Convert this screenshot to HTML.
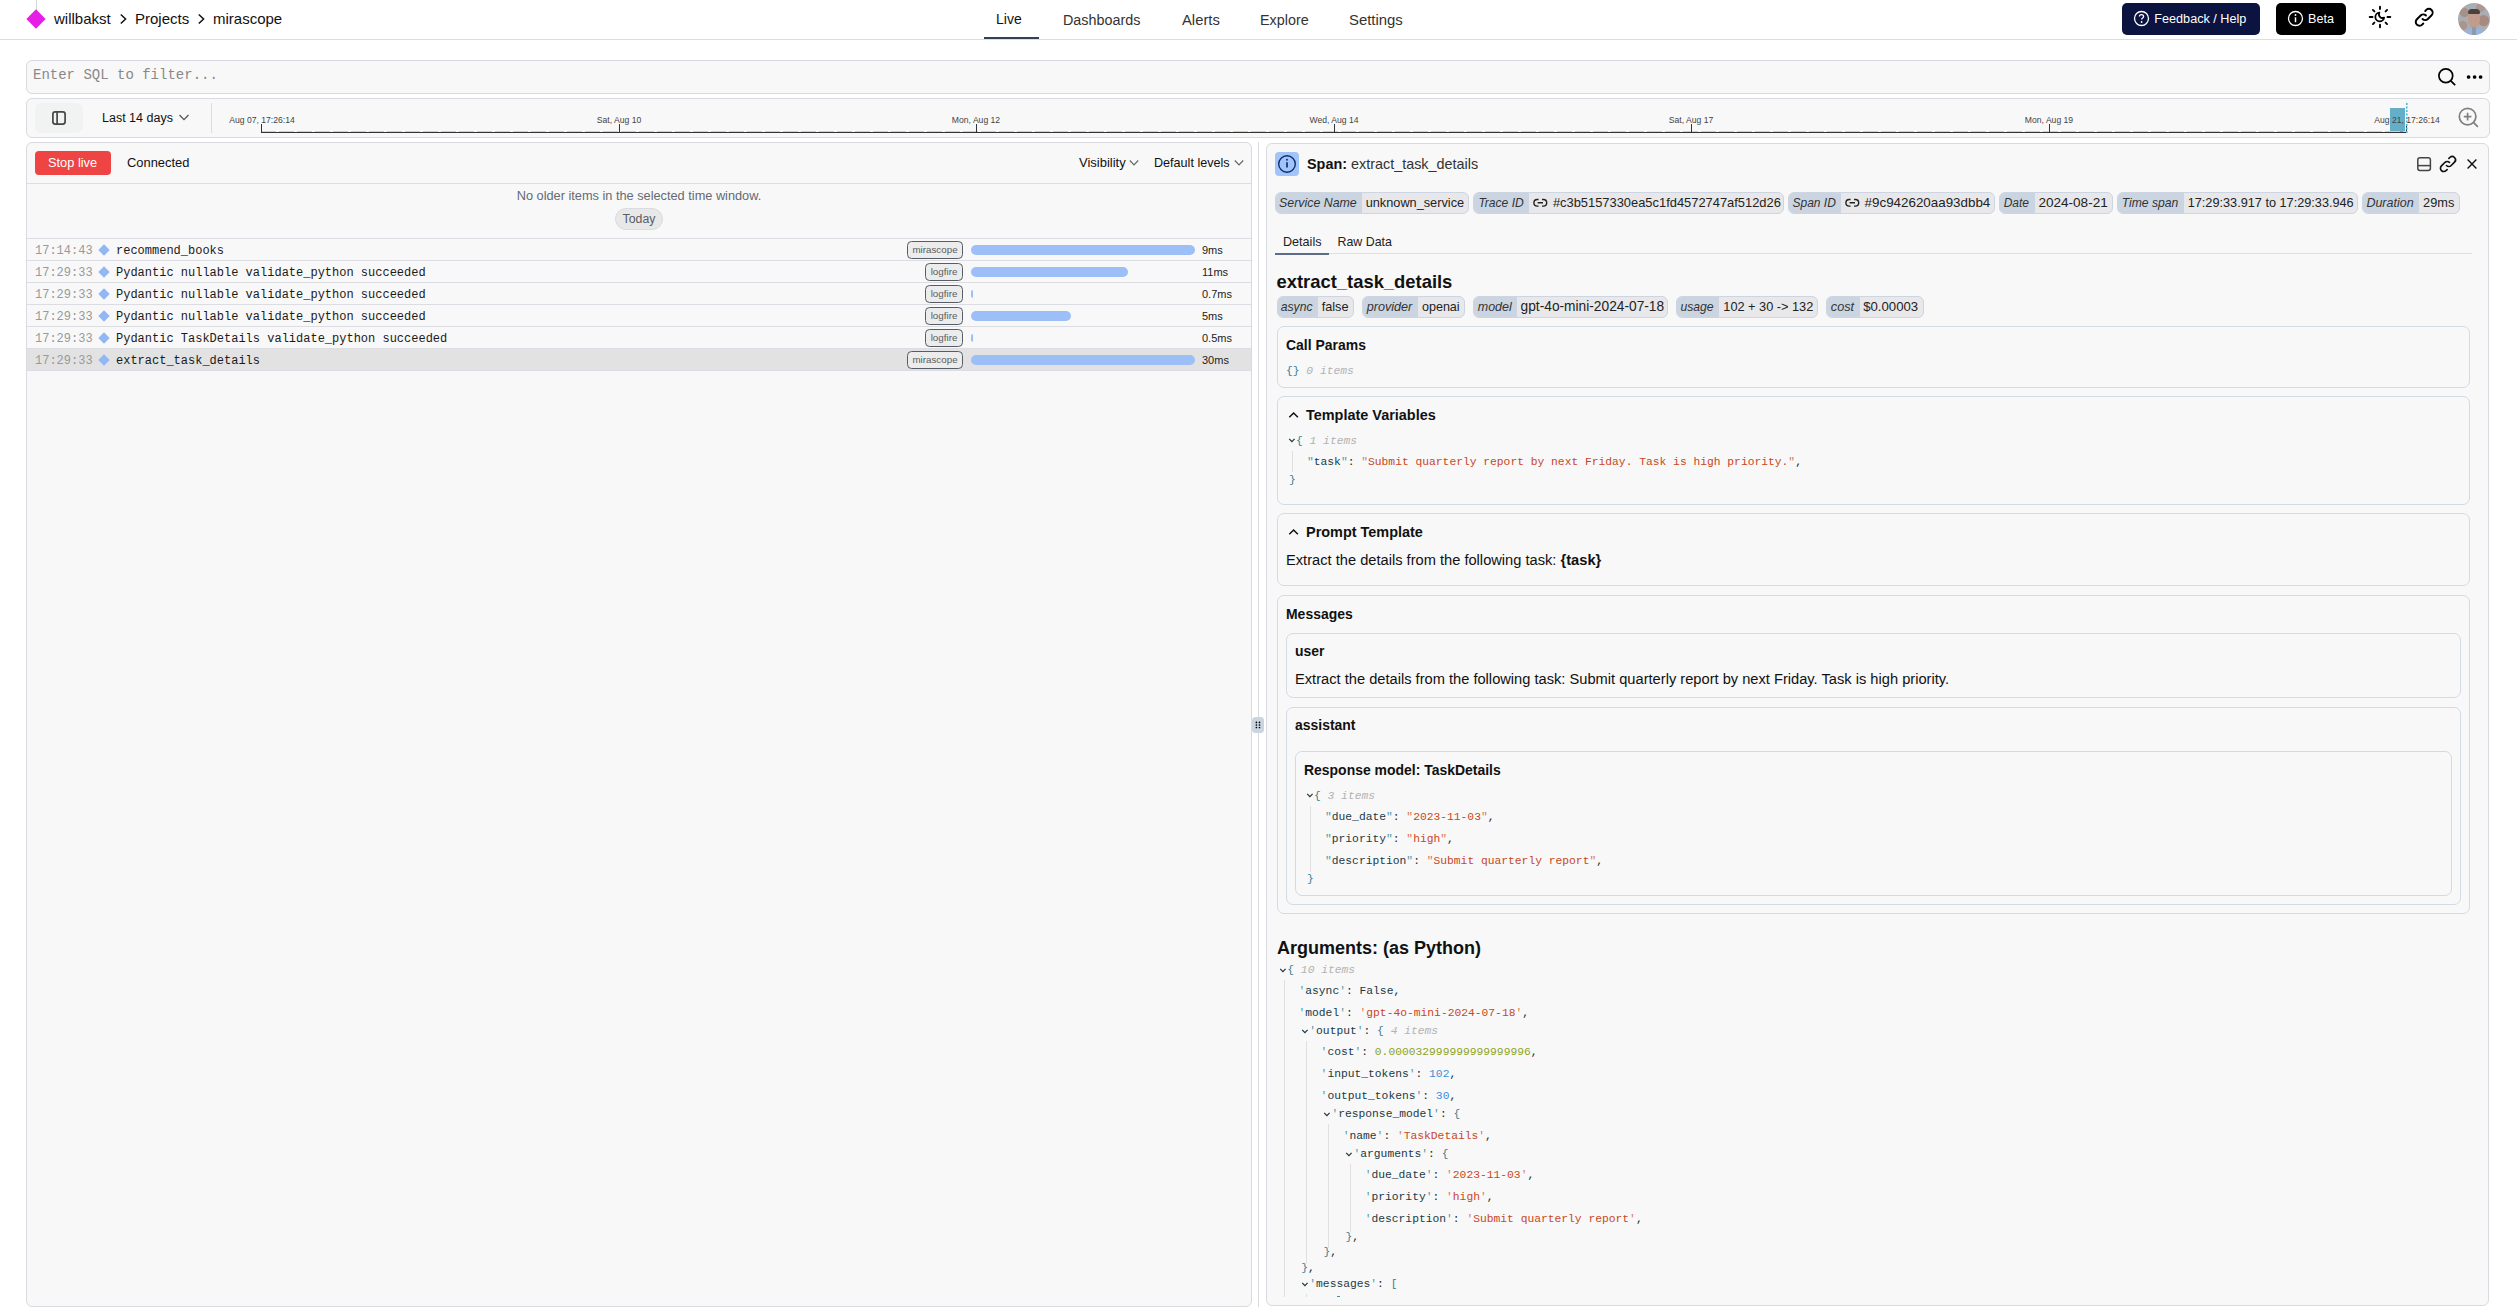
<!DOCTYPE html>
<html><head><meta charset="utf-8">
<style>
*{box-sizing:border-box;margin:0;padding:0}
html,body{width:2517px;height:1308px;overflow:hidden;background:#fff;font-family:"Liberation Sans",sans-serif;color:#111}
.a{position:absolute;white-space:nowrap}
.mono{font-family:"Liberation Mono",monospace}
.box{position:absolute;background:#f8f8f8;border:1px solid #d9dadf;border-radius:6px}
</style></head><body>
<!-- HEADER -->
<div class="a" style="left:0;top:39px;width:2517px;height:1px;background:#dcdde2"></div>
<div class="a" style="left:36px;top:0;width:1px;height:10px;background:#d4d6da"></div>
<svg class="a" style="left:25px;top:8px" width="22" height="22" viewBox="0 0 22 22"><path d="M11 1.2 L20.6 11 L11 20.8 L1.4 11 Z" fill="#e61ee6"/></svg>
<div class="a" style="left:54px;top:10px;font-size:15px;line-height:18px;color:#111">willbakst</div>
<svg class="a" style="left:118px;top:13px" width="10" height="12" viewBox="0 0 10 12"><path d="M2.8 1.5 L7.6 6 L2.8 10.5" fill="none" stroke="#111" stroke-width="1.5"/></svg>
<div class="a" style="left:135px;top:10px;font-size:15px;line-height:18px;color:#111">Projects</div>
<svg class="a" style="left:196px;top:13px" width="10" height="12" viewBox="0 0 10 12"><path d="M2.8 1.5 L7.6 6 L2.8 10.5" fill="none" stroke="#111" stroke-width="1.5"/></svg>
<div class="a" style="left:213px;top:10px;font-size:15px;line-height:18px;color:#111">mirascope</div>

<div class="a" style="left:996px;top:10px;font-size:14px;line-height:18px;color:#111">Live</div>
<div class="a" style="left:984px;top:37px;width:55px;height:2px;background:#334155"></div>
<div class="a" style="left:1063px;top:11px;font-size:14.35px;line-height:18px;color:#333">Dashboards</div>
<div class="a" style="left:1182px;top:11px;font-size:14.8px;line-height:18px;color:#333">Alerts</div>
<div class="a" style="left:1260px;top:11px;font-size:14.35px;line-height:18px;color:#333">Explore</div>
<div class="a" style="left:1349px;top:11px;font-size:14.9px;line-height:18px;color:#333">Settings</div>

<div class="a" style="left:2122px;top:3px;width:138px;height:32px;background:#0b1340;border-radius:5px"></div>
<svg class="a" style="left:2133px;top:10px" width="17" height="17" viewBox="0 0 17 17"><circle cx="8.5" cy="8.5" r="7" fill="none" stroke="#fff" stroke-width="1.3"/><path d="M6.4 6.6 C6.4 5.3 7.4 4.6 8.5 4.6 C9.7 4.6 10.6 5.4 10.6 6.5 C10.6 7.9 8.6 8 8.6 9.6" fill="none" stroke="#fff" stroke-width="1.3"/><circle cx="8.6" cy="12" r="0.9" fill="#fff"/></svg>
<div class="a" style="left:2154.3px;top:10px;font-size:12.65px;line-height:18px;color:#fff">Feedback / Help</div>
<div class="a" style="left:2276px;top:3px;width:70px;height:32px;background:#000;border-radius:5px"></div>
<svg class="a" style="left:2287px;top:10px" width="17" height="17" viewBox="0 0 17 17"><circle cx="8.5" cy="8.5" r="7" fill="none" stroke="#fff" stroke-width="1.3"/><path d="M8.5 7.3 V12.2" stroke="#fff" stroke-width="1.5"/><circle cx="8.5" cy="5" r="0.95" fill="#fff"/></svg>
<div class="a" style="left:2308px;top:10px;font-size:12.6px;line-height:18px;color:#fff">Beta</div>

<svg class="a" style="left:2368px;top:5px" width="24" height="24" viewBox="0 0 24 24" fill="none" stroke="#000" stroke-width="1.9" stroke-linecap="butt">
<path d="M12 1.8V4.1M12 19.8V22.2M1.7 12H4.5M19.5 12H22.3M4.9 4.9L6.4 6.4M17.6 17.6L19.1 19.1M4.9 19.1L6.4 17.6M17.6 6.4L19.1 4.9" stroke-linecap="round"/>
<path d="M11.4 7.6 A4.4 4.4 0 1 0 16.1 12.6 A3.6 3.6 0 0 1 11.4 7.6 Z" stroke-width="1.8" stroke-linejoin="round"/>
</svg>
<svg class="a" style="left:2412.5px;top:5.5px" width="22.5" height="22.5" viewBox="0 0 24 24" fill="none" stroke="#000" stroke-width="2.1" stroke-linecap="round" stroke-linejoin="round"><path d="M13.828 10.172a4 4 0 00-5.656 0l-4 4a4 4 0 105.656 5.656l1.102-1.101m-.758-4.899a4 4 0 005.656 0l4-4a4 4 0 00-5.656-5.656l-1.1 1.1"/></svg>
<div class="a" style="left:2458px;top:3px;width:32px;height:32px;border-radius:50%;overflow:hidden;background:#a8aeb2">
<div class="a" style="left:0;top:0;width:32px;height:32px;background:radial-gradient(circle at 20% 30%,rgba(170,120,100,.55) 0 4px,transparent 5px),radial-gradient(circle at 80% 55%,rgba(165,115,95,.6) 0 5px,transparent 6px),radial-gradient(circle at 15% 70%,rgba(170,125,105,.5) 0 4px,transparent 5px),radial-gradient(circle at 70% 15%,rgba(175,130,110,.5) 0 4px,transparent 5px)"></div>
<div class="a" style="left:10px;top:8px;width:12px;height:17px;border-radius:45% 45% 50% 50%;background:#c09c8c"></div>
<div class="a" style="left:10px;top:6px;width:12px;height:5px;border-radius:6px 6px 2px 2px;background:#4a4240"></div>
<div class="a" style="left:5px;top:25px;width:23px;height:11px;border-radius:10px 10px 0 0;background:#98b2e2"></div>
<div class="a" style="left:14px;top:24px;width:4px;height:8px;background:#8f9aa2"></div>
</div>

<!-- SQL BOX -->
<div class="box" style="left:26px;top:60px;width:2464px;height:34px"></div>
<div class="a mono" style="left:33px;top:67px;font-size:14px;line-height:16px;color:#888">Enter SQL to filter...</div>

<!-- TIMELINE BOX -->
<div class="box" style="left:26px;top:98px;width:2464px;height:40px"></div>
<div class="a" style="left:35px;top:103px;width:48px;height:30px;background:#f1f2f2;border-radius:7px"></div>
<svg class="a" style="left:50px;top:109px" width="18" height="18" viewBox="0 0 18 18" fill="none" stroke="#464646" stroke-width="1.7"><rect x="2.9" y="2.9" width="12.2" height="12.2" rx="2.3"/><path d="M7.1 3V15"/></svg>
<div class="a" style="left:102px;top:110px;font-size:12.5px;line-height:16px;color:#111">Last 14 days</div>
<svg class="a" style="left:178px;top:112px" width="12" height="10" viewBox="0 0 12 10" fill="none" stroke="#555" stroke-width="1.3"><path d="M1.5 3 L6 7.6 L10.5 3"/></svg>
<div class="a" style="left:211px;top:103px;width:1px;height:30px;background:#dcdde0"></div>
<div class="a" style="left:2390px;top:108px;width:15px;height:24px;background:#64aec8"></div>
<svg class="a" style="left:255px;top:128px" width="2160" height="8"><path d="M6 3.5 H2151" stroke="#a9dbe8" stroke-width="1" stroke-dasharray="15 3"/><path d="M6 4.5 H2151" stroke="#333" stroke-width="1"/></svg>
<div class="a" style="left:261px;top:124px;width:1px;height:9px;background:#333"></div>
<div class="a" style="left:202px;top:115px;width:120px;text-align:center;font-size:8.6px;line-height:10px;color:#444">Aug 07, 17:26:14</div>
<div class="a" style="left:619px;top:124px;width:1px;height:9px;background:#333"></div>
<div class="a" style="left:559px;top:115px;width:120px;text-align:center;font-size:8.6px;line-height:10px;color:#444">Sat, Aug 10</div>
<div class="a" style="left:976px;top:124px;width:1px;height:9px;background:#333"></div>
<div class="a" style="left:916px;top:115px;width:120px;text-align:center;font-size:8.6px;line-height:10px;color:#444">Mon, Aug 12</div>
<div class="a" style="left:1334px;top:124px;width:1px;height:9px;background:#333"></div>
<div class="a" style="left:1274px;top:115px;width:120px;text-align:center;font-size:8.6px;line-height:10px;color:#444">Wed, Aug 14</div>
<div class="a" style="left:1691px;top:124px;width:1px;height:9px;background:#333"></div>
<div class="a" style="left:1631px;top:115px;width:120px;text-align:center;font-size:8.6px;line-height:10px;color:#444">Sat, Aug 17</div>
<div class="a" style="left:2049px;top:124px;width:1px;height:9px;background:#333"></div>
<div class="a" style="left:1989px;top:115px;width:120px;text-align:center;font-size:8.6px;line-height:10px;color:#444">Mon, Aug 19</div>
<div class="a" style="left:2406px;top:124px;width:1px;height:9px;background:#333"></div>
<div class="a" style="left:2347px;top:115px;width:120px;text-align:center;font-size:8.6px;line-height:10px;color:#444">Aug 21, 17:26:14</div>
<svg class="a" style="left:2403px;top:101px" width="8" height="33"><path d="M3.8 2 V32" stroke="#4fb9da" stroke-width="1.6" stroke-dasharray="2 1.5"/></svg>
<svg class="a" style="left:2457px;top:106px" width="24" height="24" viewBox="0 0 24 24" fill="none" stroke="#808080" stroke-width="1.7"><circle cx="10.6" cy="10.6" r="8.3"/><path d="M16.6 16.6 L20.9 20.9M10.6 6.8V14.4M6.8 10.6H14.4"/></svg>

<!-- SQL icons -->
<svg class="a" style="left:2436px;top:66px" width="22" height="22" viewBox="0 0 22 22" fill="none" stroke="#000" stroke-width="1.7"><circle cx="9.8" cy="9.8" r="6.9"/><path d="M14.8 14.8 L19.2 19.2"/></svg>
<svg class="a" style="left:2465px;top:72px" width="20" height="10" viewBox="0 0 20 10" fill="#000"><circle cx="3.6" cy="5" r="1.85"/><circle cx="9.6" cy="5" r="1.85"/><circle cx="15.6" cy="5" r="1.85"/></svg>

<!-- LEFT PANEL -->
<div class="box" style="left:26px;top:142px;width:1226px;height:1165px"></div>
<div class="a" style="left:35px;top:151px;width:76px;height:24px;background:#ef4444;border-radius:4px"></div>
<div class="a" style="left:48px;top:155px;font-size:12.8px;line-height:16px;color:#fff">Stop live</div>
<div class="a" style="left:127px;top:155px;font-size:12.9px;line-height:16px;color:#111">Connected</div>
<div class="a" style="left:1079px;top:155px;font-size:13px;line-height:16px;color:#111">Visibility</div>
<svg class="a" style="left:1128px;top:158px" width="12" height="9" viewBox="0 0 12 9" fill="none" stroke="#666" stroke-width="1.2"><path d="M1.8 2.5 L6 6.8 L10.2 2.5"/></svg>
<div class="a" style="left:1154px;top:155px;font-size:12.6px;line-height:16px;color:#111">Default levels</div>
<svg class="a" style="left:1233px;top:158px" width="12" height="9" viewBox="0 0 12 9" fill="none" stroke="#666" stroke-width="1.2"><path d="M1.8 2.5 L6 6.8 L10.2 2.5"/></svg>
<div class="a" style="left:27px;top:183px;width:1224px;height:1px;background:#dcdde2"></div>
<div class="a" style="left:27px;top:188px;width:1224px;text-align:center;font-size:12.75px;line-height:16px;color:#646a74">No older items in the selected time window.</div>
<div class="a" style="left:615px;top:208px;width:48px;height:22px;background:#e8e8e9;border:1px solid #dadbdf;border-radius:11px"></div>
<div class="a" style="left:615px;top:211px;width:48px;text-align:center;font-size:12.3px;line-height:16px;color:#585d66">Today</div>
<div class="a" style="left:27px;top:238px;width:1224px;height:1px;background:#dcdde2"></div>
<div class="a" style="left:27px;top:239px;width:1224px;height:21px;background:transparent"></div>
<div class="a mono" style="left:35px;top:244px;font-size:12px;line-height:14px;color:#999">17:14:43</div>
<div class="a" style="left:100px;top:246px;width:8px;height:8px;background:#93b6f5;transform:rotate(45deg)"></div>
<div class="a mono" style="left:116px;top:244px;font-size:12px;line-height:14px;color:#1a1a1a">recommend_books</div>
<div class="a" style="left:907px;top:241px;width:56px;height:18px;border:1px solid #565d66;border-radius:4.5px;background:#ececec;font-size:9.8px;line-height:16px;text-align:center;color:#5c5c5c">mirascope</div>
<div class="a" style="left:971px;top:245px;width:224px;height:10px;background:#9dbff7;border-radius:5px"></div>
<div class="a" style="left:1202px;top:243px;font-size:11px;line-height:14px;color:#222">9ms</div>
<div class="a" style="left:27px;top:260px;width:1224px;height:1px;background:#dcdde2"></div>
<div class="a" style="left:27px;top:261px;width:1224px;height:21px;background:transparent"></div>
<div class="a mono" style="left:35px;top:266px;font-size:12px;line-height:14px;color:#999">17:29:33</div>
<div class="a" style="left:100px;top:268px;width:8px;height:8px;background:#93b6f5;transform:rotate(45deg)"></div>
<div class="a mono" style="left:116px;top:266px;font-size:12px;line-height:14px;color:#1a1a1a">Pydantic nullable validate_python succeeded</div>
<div class="a" style="left:925px;top:263px;width:38px;height:18px;border:1px solid #565d66;border-radius:4.5px;background:#ececec;font-size:9.8px;line-height:16px;text-align:center;color:#5c5c5c">logfire</div>
<div class="a" style="left:971px;top:267px;width:157px;height:10px;background:#9dbff7;border-radius:5px"></div>
<div class="a" style="left:1202px;top:265px;font-size:11px;line-height:14px;color:#222">11ms</div>
<div class="a" style="left:27px;top:282px;width:1224px;height:1px;background:#dcdde2"></div>
<div class="a" style="left:27px;top:283px;width:1224px;height:21px;background:transparent"></div>
<div class="a mono" style="left:35px;top:288px;font-size:12px;line-height:14px;color:#999">17:29:33</div>
<div class="a" style="left:100px;top:290px;width:8px;height:8px;background:#93b6f5;transform:rotate(45deg)"></div>
<div class="a mono" style="left:116px;top:288px;font-size:12px;line-height:14px;color:#1a1a1a">Pydantic nullable validate_python succeeded</div>
<div class="a" style="left:925px;top:285px;width:38px;height:18px;border:1px solid #565d66;border-radius:4.5px;background:#ececec;font-size:9.8px;line-height:16px;text-align:center;color:#5c5c5c">logfire</div>
<div class="a" style="left:971px;top:290px;width:2px;height:8px;background:#9dbff7;border-radius:2px 1px 1px 2px / 4px 1px 1px 4px"></div>
<div class="a" style="left:1202px;top:287px;font-size:11px;line-height:14px;color:#222">0.7ms</div>
<div class="a" style="left:27px;top:304px;width:1224px;height:1px;background:#dcdde2"></div>
<div class="a" style="left:27px;top:305px;width:1224px;height:21px;background:transparent"></div>
<div class="a mono" style="left:35px;top:310px;font-size:12px;line-height:14px;color:#999">17:29:33</div>
<div class="a" style="left:100px;top:312px;width:8px;height:8px;background:#93b6f5;transform:rotate(45deg)"></div>
<div class="a mono" style="left:116px;top:310px;font-size:12px;line-height:14px;color:#1a1a1a">Pydantic nullable validate_python succeeded</div>
<div class="a" style="left:925px;top:307px;width:38px;height:18px;border:1px solid #565d66;border-radius:4.5px;background:#ececec;font-size:9.8px;line-height:16px;text-align:center;color:#5c5c5c">logfire</div>
<div class="a" style="left:971px;top:311px;width:100px;height:10px;background:#9dbff7;border-radius:5px"></div>
<div class="a" style="left:1202px;top:309px;font-size:11px;line-height:14px;color:#222">5ms</div>
<div class="a" style="left:27px;top:326px;width:1224px;height:1px;background:#dcdde2"></div>
<div class="a" style="left:27px;top:327px;width:1224px;height:21px;background:transparent"></div>
<div class="a mono" style="left:35px;top:332px;font-size:12px;line-height:14px;color:#999">17:29:33</div>
<div class="a" style="left:100px;top:334px;width:8px;height:8px;background:#93b6f5;transform:rotate(45deg)"></div>
<div class="a mono" style="left:116px;top:332px;font-size:12px;line-height:14px;color:#1a1a1a">Pydantic TaskDetails validate_python succeeded</div>
<div class="a" style="left:925px;top:329px;width:38px;height:18px;border:1px solid #565d66;border-radius:4.5px;background:#ececec;font-size:9.8px;line-height:16px;text-align:center;color:#5c5c5c">logfire</div>
<div class="a" style="left:971px;top:334px;width:2px;height:8px;background:#9dbff7;border-radius:2px 1px 1px 2px / 4px 1px 1px 4px"></div>
<div class="a" style="left:1202px;top:331px;font-size:11px;line-height:14px;color:#222">0.5ms</div>
<div class="a" style="left:27px;top:348px;width:1224px;height:1px;background:#dcdde2"></div>
<div class="a" style="left:27px;top:349px;width:1224px;height:21px;background:#e2e2e3"></div>
<div class="a mono" style="left:35px;top:354px;font-size:12px;line-height:14px;color:#999">17:29:33</div>
<div class="a" style="left:100px;top:356px;width:8px;height:8px;background:#93b6f5;transform:rotate(45deg)"></div>
<div class="a mono" style="left:116px;top:354px;font-size:12px;line-height:14px;color:#1a1a1a">extract_task_details</div>
<div class="a" style="left:907px;top:351px;width:56px;height:18px;border:1px solid #565d66;border-radius:4.5px;background:#ececec;font-size:9.8px;line-height:16px;text-align:center;color:#5c5c5c">mirascope</div>
<div class="a" style="left:971px;top:355px;width:224px;height:10px;background:#9dbff7;border-radius:5px"></div>
<div class="a" style="left:1202px;top:353px;font-size:11px;line-height:14px;color:#222">30ms</div>
<div class="a" style="left:27px;top:370px;width:1224px;height:1px;background:#dcdde2"></div>

<!-- RIGHT PANEL -->
<div class="box" style="left:1266px;top:143px;width:1223px;height:1163px"></div>
<div class="a" style="left:1258px;top:142px;width:1px;height:1165px;background:#d8dbe0"></div>
<div class="a" style="left:1252px;top:717px;width:12px;height:16px;background:#cbd5e1;border-radius:3.5px"></div>
<svg class="a" style="left:1252px;top:717px" width="12" height="16" viewBox="0 0 12 16" fill="#000"><circle cx="4.4" cy="5.4" r="0.85"/><circle cx="7.5" cy="5.4" r="0.85"/><circle cx="4.4" cy="8" r="0.85"/><circle cx="7.5" cy="8" r="0.85"/><circle cx="4.4" cy="10.5" r="0.85"/><circle cx="7.5" cy="10.5" r="0.85"/></svg>
<div class="a" style="left:1275px;top:152px;width:24px;height:24px;background:#a3c4f8;border-radius:4px"></div>
<svg class="a" style="left:1277px;top:154px" width="20" height="20" viewBox="0 0 20 20"><circle cx="10" cy="10" r="8.3" fill="none" stroke="#0c2f74" stroke-width="1.4"/><path d="M10 8.3V13.4" stroke="#0c2f74" stroke-width="1.7"/><circle cx="10" cy="5.8" r="0.95" fill="#0c2f74"/></svg>
<div class="a" style="left:1307.0px;top:154.74px;font-size:14.4px;line-height:19px;color:#111;"><b>Span:</b> <span style="color:#333">extract_task_details</span></div>
<svg class="a" style="left:2414px;top:154px" width="20" height="20" viewBox="0 0 20 20" fill="none" stroke="#444" stroke-width="1.5"><rect x="3.8" y="3.8" width="12.6" height="12.6" rx="2.2"/><path d="M3.8 11.6H16.4"/></svg>
<svg class="a" style="left:2438px;top:154px" width="20" height="20" viewBox="0 0 24 24" fill="none" stroke="#111" stroke-width="2" stroke-linecap="round" stroke-linejoin="round"><path d="M13.828 10.172a4 4 0 00-5.656 0l-4 4a4 4 0 105.656 5.656l1.102-1.101m-.758-4.899a4 4 0 005.656 0l4-4a4 4 0 00-5.656-5.656l-1.1 1.1"/></svg>
<svg class="a" style="left:2462px;top:154px" width="20" height="20" viewBox="0 0 20 20" fill="none" stroke="#111" stroke-width="1.4"><path d="M5.6 5.6 L14.4 14.4 M14.4 5.6 L5.6 14.4"/></svg>
<div class="a" style="left:1275px;top:192px;width:194px;height:22px;border:1px solid #ccd5e1;border-radius:6px;background:#e8e8ea;overflow:hidden"><div class="a" style="left:0;top:0;width:86px;height:20px;background:#cbd5e1"></div></div>
<div class="a" style="left:1279.0px;top:194.91px;font-size:12.39px;line-height:16px;color:#333;"><i>Service Name</i></div>
<div class="a" style="left:1365.7px;top:194.29px;font-size:12.74px;line-height:17px;color:#222;">unknown_service</div>
<div class="a" style="left:1473px;top:192px;width:310.5px;height:22px;border:1px solid #ccd5e1;border-radius:6px;background:#e8e8ea;overflow:hidden"><div class="a" style="left:0;top:0;width:55px;height:20px;background:#cbd5e1"></div></div>
<div class="a" style="left:1478.4px;top:195.02px;font-size:12.05px;line-height:16px;color:#333;"><i>Trace ID</i></div>
<svg class="a" style="left:1533.1px;top:198px" width="15" height="10" viewBox="0 0 15 10" fill="none" stroke="#222" stroke-width="1.4"><path d="M5.6 1.5 H4.2 A3.3 3.3 0 0 0 4.2 8.1 H5.6 M9 1.5 H10.4 A3.3 3.3 0 0 1 10.4 8.1 H9 M4.6 4.8 H10"/></svg>
<div class="a" style="left:1552.9px;top:194.24px;font-size:12.9px;line-height:17px;color:#222;">#c3b5157330ea5c1fd4572747af512d26</div>
<div class="a" style="left:1788px;top:192px;width:207px;height:22px;border:1px solid #ccd5e1;border-radius:6px;background:#e8e8ea;overflow:hidden"><div class="a" style="left:0;top:0;width:52px;height:20px;background:#cbd5e1"></div></div>
<div class="a" style="left:1792.5px;top:195.03px;font-size:12.0px;line-height:16px;color:#333;"><i>Span ID</i></div>
<svg class="a" style="left:1845.3px;top:198px" width="15" height="10" viewBox="0 0 15 10" fill="none" stroke="#222" stroke-width="1.4"><path d="M5.6 1.5 H4.2 A3.3 3.3 0 0 0 4.2 8.1 H5.6 M9 1.5 H10.4 A3.3 3.3 0 0 1 10.4 8.1 H9 M4.6 4.8 H10"/></svg>
<div class="a" style="left:1864.6px;top:194.07px;font-size:13.39px;line-height:17px;color:#222;">#9c942620aa93dbb4</div>
<div class="a" style="left:1999px;top:192px;width:113.5px;height:22px;border:1px solid #ccd5e1;border-radius:6px;background:#e8e8ea;overflow:hidden"><div class="a" style="left:0;top:0;width:35px;height:20px;background:#cbd5e1"></div></div>
<div class="a" style="left:2003.7px;top:195.03px;font-size:12.0px;line-height:16px;color:#333;"><i>Date</i></div>
<div class="a" style="left:2038.4px;top:193.52px;font-size:13.57px;line-height:18px;color:#222;">2024-08-21</div>
<div class="a" style="left:2117px;top:192px;width:241px;height:22px;border:1px solid #ccd5e1;border-radius:6px;background:#e8e8ea;overflow:hidden"><div class="a" style="left:0;top:0;width:66px;height:20px;background:#cbd5e1"></div></div>
<div class="a" style="left:2121.7px;top:194.98px;font-size:12.17px;line-height:16px;color:#333;"><i>Time span</i></div>
<div class="a" style="left:2187.7px;top:194.30px;font-size:12.71px;line-height:17px;color:#222;">17:29:33.917 to 17:29:33.946</div>
<div class="a" style="left:2362px;top:192px;width:98px;height:22px;border:1px solid #ccd5e1;border-radius:6px;background:#e8e8ea;overflow:hidden"><div class="a" style="left:0;top:0;width:56px;height:20px;background:#cbd5e1"></div></div>
<div class="a" style="left:2366.4px;top:194.87px;font-size:12.5px;line-height:16px;color:#333;"><i>Duration</i></div>
<div class="a" style="left:2423.1px;top:194.28px;font-size:12.76px;line-height:17px;color:#222;">29ms</div>
<div class="a" style="left:1283.0px;top:233.84px;font-size:12.6px;line-height:16px;color:#222;">Details</div>
<div class="a" style="left:1337.5px;top:233.90px;font-size:12.4px;line-height:16px;color:#222;">Raw Data</div>
<div class="a" style="left:1275px;top:253px;width:1197px;height:1px;background:#dcdfe4"></div>
<div class="a" style="left:1275px;top:252.5px;width:54px;height:2px;background:#5b6d89"></div>
<div class="a" style="left:1276.5px;top:269.92px;font-size:18.4px;line-height:24px;color:#111;font-weight:bold;">extract_task_details</div>
<div class="a" style="left:1277px;top:296px;width:77px;height:22px;border:1px solid #ccd5e1;border-radius:6px;background:#e8e8ea;overflow:hidden"><div class="a" style="left:0;top:0;width:40px;height:20px;background:#cbd5e1"></div></div>
<div class="a" style="left:1280.7px;top:298.97px;font-size:12.18px;line-height:16px;color:#333;"><i>async</i></div>
<div class="a" style="left:1321.7px;top:298.90px;font-size:12.7px;line-height:17px;color:#222;">false</div>
<div class="a" style="left:1362px;top:296px;width:103px;height:22px;border:1px solid #ccd5e1;border-radius:6px;background:#e8e8ea;overflow:hidden"><div class="a" style="left:0;top:0;width:55px;height:20px;background:#cbd5e1"></div></div>
<div class="a" style="left:1366.7px;top:298.82px;font-size:12.64px;line-height:16px;color:#333;"><i>provider</i></div>
<div class="a" style="left:1421.9px;top:299.44px;font-size:12.59px;line-height:16px;color:#222;">openai</div>
<div class="a" style="left:1473px;top:296px;width:195px;height:22px;border:1px solid #ccd5e1;border-radius:6px;background:#e8e8ea;overflow:hidden"><div class="a" style="left:0;top:0;width:43px;height:20px;background:#cbd5e1"></div></div>
<div class="a" style="left:1477.8px;top:298.88px;font-size:12.47px;line-height:16px;color:#333;"><i>model</i></div>
<div class="a" style="left:1520.6px;top:298.06px;font-size:13.74px;line-height:18px;color:#222;">gpt-4o-mini-2024-07-18</div>
<div class="a" style="left:1676px;top:296px;width:142px;height:22px;border:1px solid #ccd5e1;border-radius:6px;background:#e8e8ea;overflow:hidden"><div class="a" style="left:0;top:0;width:42px;height:20px;background:#cbd5e1"></div></div>
<div class="a" style="left:1680.5px;top:298.98px;font-size:12.17px;line-height:16px;color:#333;"><i>usage</i></div>
<div class="a" style="left:1723.3px;top:298.29px;font-size:12.74px;line-height:17px;color:#222;">102 + 30 -&gt; 132</div>
<div class="a" style="left:1826px;top:296px;width:98px;height:22px;border:1px solid #ccd5e1;border-radius:6px;background:#e8e8ea;overflow:hidden"><div class="a" style="left:0;top:0;width:33px;height:20px;background:#cbd5e1"></div></div>
<div class="a" style="left:1830.8px;top:298.30px;font-size:12.71px;line-height:17px;color:#333;"><i>cost</i></div>
<div class="a" style="left:1863.2px;top:298.14px;font-size:13.19px;line-height:17px;color:#222;">$0.00003</div>
<div class="a" style="left:1277px;top:326px;width:1193px;height:62px;border:1px solid #d2dae5;border-radius:7px"></div>
<div class="a" style="left:1286.0px;top:336.39px;font-size:13.96px;line-height:18px;color:#111;font-weight:bold;">Call Params</div>
<div class="a mono" style="left:1286.0px;top:363.79px;font-size:11.3px;line-height:14px;"><span style="color:#3c7e8e">{}</span> <span style="color:#b3b3b3;font-style:italic">0 items</span></div>
<div class="a" style="left:1277px;top:396px;width:1193px;height:109px;border:1px solid #d2dae5;border-radius:7px"></div>
<svg class="a" style="left:1287px;top:410px" width="13" height="10" viewBox="0 0 13 10"><path d="M2.3 7.3 L6.6 3 L10.9 7.3" fill="none" stroke="#111" stroke-width="1.5"/></svg>
<div class="a" style="left:1306.0px;top:405.72px;font-size:14.45px;line-height:19px;color:#111;font-weight:bold;">Template Variables</div>
<svg class="a" style="left:1287.8px;top:437.1px" width="8" height="7" viewBox="0 0 8 7"><path d="M1.2 1.9 L3.9 4.6 L6.6 1.9" fill="none" stroke="#1c3440" stroke-width="1.2"/></svg>
<div class="a mono" style="left:1296.0px;top:434.19px;font-size:11.3px;line-height:14px;"><span style="color:#3c7e8e">{</span> <span style="color:#b3b3b3;font-style:italic">1 items</span></div>
<div class="a" style="left:1292.0px;top:451px;width:1px;height:21px;background:#e0e0e0"></div>
<div class="a mono" style="left:1307.0px;top:454.99px;font-size:11.3px;line-height:14px;"><span style="color:#5599aa">"</span><span style="color:#1b3a45">task</span><span style="color:#5599aa">"</span><span style="color:#1b2b33">: </span><span style="color:#d9795a">"</span><span style="color:#c8471f">Submit quarterly report by next Friday. Task is high priority.</span><span style="color:#d9795a">"</span><span style="color:#1b2b33">,</span></div>
<div class="a mono" style="left:1289.0px;top:473.19px;font-size:11.3px;line-height:14px;"><span style="color:#3c7e8e">}</span></div>
<div class="a" style="left:1277px;top:513px;width:1193px;height:73px;border:1px solid #d2dae5;border-radius:7px"></div>
<svg class="a" style="left:1287px;top:527px" width="13" height="10" viewBox="0 0 13 10"><path d="M2.3 7.3 L6.6 3 L10.9 7.3" fill="none" stroke="#111" stroke-width="1.5"/></svg>
<div class="a" style="left:1306.0px;top:522.92px;font-size:14.45px;line-height:19px;color:#111;font-weight:bold;">Prompt Template</div>
<div class="a" style="left:1286.0px;top:550.95px;font-size:14.67px;line-height:19px;color:#111;">Extract the details from the following task: <b>{task}</b></div>
<div class="a" style="left:1277px;top:595px;width:1193px;height:319px;border:1px solid #d2dae5;border-radius:7px"></div>
<div class="a" style="left:1286.0px;top:604.99px;font-size:13.96px;line-height:18px;color:#111;font-weight:bold;">Messages</div>
<div class="a" style="left:1286px;top:633px;width:1175px;height:65px;border:1px solid #d2dae5;border-radius:7px"></div>
<div class="a" style="left:1295.0px;top:641.89px;font-size:13.96px;line-height:18px;color:#111;font-weight:bold;">user</div>
<div class="a" style="left:1295.0px;top:669.65px;font-size:14.67px;line-height:19px;color:#111;">Extract the details from the following task: Submit quarterly report by next Friday. Task is high priority.</div>
<div class="a" style="left:1286px;top:707px;width:1175px;height:198px;border:1px solid #d2dae5;border-radius:7px"></div>
<div class="a" style="left:1295.0px;top:715.99px;font-size:13.96px;line-height:18px;color:#111;font-weight:bold;">assistant</div>
<div class="a" style="left:1295px;top:751px;width:1157px;height:145px;border:1px solid #d2dae5;border-radius:7px"></div>
<div class="a" style="left:1304.0px;top:761.49px;font-size:13.96px;line-height:18px;color:#111;font-weight:bold;">Response model: TaskDetails</div>
<svg class="a" style="left:1305.5px;top:792.0px" width="8" height="7" viewBox="0 0 8 7"><path d="M1.2 1.9 L3.9 4.6 L6.6 1.9" fill="none" stroke="#1c3440" stroke-width="1.2"/></svg>
<div class="a mono" style="left:1314.0px;top:788.79px;font-size:11.3px;line-height:14px;"><span style="color:#3c7e8e">{</span> <span style="color:#b3b3b3;font-style:italic">3 items</span></div>
<div class="a" style="left:1310.0px;top:806px;width:1px;height:66px;background:#e0e0e0"></div>
<div class="a mono" style="left:1325.0px;top:809.89px;font-size:11.3px;line-height:14px;"><span style="color:#5599aa">"</span><span style="color:#1b3a45">due_date</span><span style="color:#5599aa">"</span><span style="color:#1b2b33">: </span><span style="color:#d9795a">"</span><span style="color:#c8471f">2023-11-03</span><span style="color:#d9795a">"</span><span style="color:#1b2b33">,</span></div>
<div class="a mono" style="left:1325.0px;top:831.99px;font-size:11.3px;line-height:14px;"><span style="color:#5599aa">"</span><span style="color:#1b3a45">priority</span><span style="color:#5599aa">"</span><span style="color:#1b2b33">: </span><span style="color:#d9795a">"</span><span style="color:#c8471f">high</span><span style="color:#d9795a">"</span><span style="color:#1b2b33">,</span></div>
<div class="a mono" style="left:1325.0px;top:853.99px;font-size:11.3px;line-height:14px;"><span style="color:#5599aa">"</span><span style="color:#1b3a45">description</span><span style="color:#5599aa">"</span><span style="color:#1b2b33">: </span><span style="color:#d9795a">"</span><span style="color:#c8471f">Submit quarterly report</span><span style="color:#d9795a">"</span><span style="color:#1b2b33">,</span></div>
<div class="a mono" style="left:1307.0px;top:871.59px;font-size:11.3px;line-height:14px;"><span style="color:#3c7e8e">}</span></div>
<div class="a" style="left:1277.0px;top:936.75px;font-size:18.0px;line-height:23px;color:#111;font-weight:bold;">Arguments: (as Python)</div>
<svg class="a" style="left:1278.9px;top:966.5px" width="8" height="7" viewBox="0 0 8 7"><path d="M1.2 1.9 L3.9 4.6 L6.6 1.9" fill="none" stroke="#1c3440" stroke-width="1.2"/></svg>
<div class="a mono" style="left:1287.3px;top:962.79px;font-size:11.3px;line-height:14px;"><span style="color:#3c7e8e">{</span> <span style="color:#b3b3b3;font-style:italic">10 items</span></div>
<div class="a mono" style="left:1298.5px;top:983.99px;font-size:11.3px;line-height:14px;"><span style="color:#5599aa">'</span><span style="color:#1b3a45">async</span><span style="color:#5599aa">'</span><span style="color:#1b2b33">: </span><span style="color:#1b3a45">False</span><span style="color:#1b2b33">,</span></div>
<div class="a mono" style="left:1298.5px;top:1005.99px;font-size:11.3px;line-height:14px;"><span style="color:#5599aa">'</span><span style="color:#1b3a45">model</span><span style="color:#5599aa">'</span><span style="color:#1b2b33">: </span><span style="color:#d9795a">'</span><span style="color:#c8471f">gpt-4o-mini-2024-07-18</span><span style="color:#d9795a">'</span><span style="color:#1b2b33">,</span></div>
<svg class="a" style="left:1301.0px;top:1027.7px" width="8" height="7" viewBox="0 0 8 7"><path d="M1.2 1.9 L3.9 4.6 L6.6 1.9" fill="none" stroke="#1c3440" stroke-width="1.2"/></svg>
<div class="a mono" style="left:1309.3px;top:1023.99px;font-size:11.3px;line-height:14px;"><span style="color:#5599aa">'</span><span style="color:#1b3a45">output</span><span style="color:#5599aa">'</span><span style="color:#1b2b33">: </span><span style="color:#3c7e8e">{</span> <span style="color:#b3b3b3;font-style:italic">4 items</span></div>
<div class="a mono" style="left:1320.6px;top:1044.79px;font-size:11.3px;line-height:14px;"><span style="color:#5599aa">'</span><span style="color:#1b3a45">cost</span><span style="color:#5599aa">'</span><span style="color:#1b2b33">: </span><span style="color:#8ea31c">0.000032999999999999996</span><span style="color:#1b2b33">,</span></div>
<div class="a mono" style="left:1320.6px;top:1066.99px;font-size:11.3px;line-height:14px;"><span style="color:#5599aa">'</span><span style="color:#1b3a45">input_tokens</span><span style="color:#5599aa">'</span><span style="color:#1b2b33">: </span><span style="color:#3b90dc">102</span><span style="color:#1b2b33">,</span></div>
<div class="a mono" style="left:1320.6px;top:1088.79px;font-size:11.3px;line-height:14px;"><span style="color:#5599aa">'</span><span style="color:#1b3a45">output_tokens</span><span style="color:#5599aa">'</span><span style="color:#1b2b33">: </span><span style="color:#3b90dc">30</span><span style="color:#1b2b33">,</span></div>
<svg class="a" style="left:1323.0px;top:1110.9px" width="8" height="7" viewBox="0 0 8 7"><path d="M1.2 1.9 L3.9 4.6 L6.6 1.9" fill="none" stroke="#1c3440" stroke-width="1.2"/></svg>
<div class="a mono" style="left:1331.4px;top:1107.19px;font-size:11.3px;line-height:14px;"><span style="color:#5599aa">'</span><span style="color:#1b3a45">response_model</span><span style="color:#5599aa">'</span><span style="color:#1b2b33">: </span><span style="color:#3c7e8e">{</span></div>
<div class="a mono" style="left:1342.7px;top:1128.79px;font-size:11.3px;line-height:14px;"><span style="color:#5599aa">'</span><span style="color:#1b3a45">name</span><span style="color:#5599aa">'</span><span style="color:#1b2b33">: </span><span style="color:#d9795a">'</span><span style="color:#c8471f">TaskDetails</span><span style="color:#d9795a">'</span><span style="color:#1b2b33">,</span></div>
<svg class="a" style="left:1345.1px;top:1150.9px" width="8" height="7" viewBox="0 0 8 7"><path d="M1.2 1.9 L3.9 4.6 L6.6 1.9" fill="none" stroke="#1c3440" stroke-width="1.2"/></svg>
<div class="a mono" style="left:1353.5px;top:1147.19px;font-size:11.3px;line-height:14px;"><span style="color:#5599aa">'</span><span style="color:#1b3a45">arguments</span><span style="color:#5599aa">'</span><span style="color:#1b2b33">: </span><span style="color:#3c7e8e">{</span></div>
<div class="a mono" style="left:1364.7px;top:1167.99px;font-size:11.3px;line-height:14px;"><span style="color:#5599aa">'</span><span style="color:#1b3a45">due_date</span><span style="color:#5599aa">'</span><span style="color:#1b2b33">: </span><span style="color:#d9795a">'</span><span style="color:#c8471f">2023-11-03</span><span style="color:#d9795a">'</span><span style="color:#1b2b33">,</span></div>
<div class="a mono" style="left:1364.7px;top:1189.99px;font-size:11.3px;line-height:14px;"><span style="color:#5599aa">'</span><span style="color:#1b3a45">priority</span><span style="color:#5599aa">'</span><span style="color:#1b2b33">: </span><span style="color:#d9795a">'</span><span style="color:#c8471f">high</span><span style="color:#d9795a">'</span><span style="color:#1b2b33">,</span></div>
<div class="a mono" style="left:1364.7px;top:1211.79px;font-size:11.3px;line-height:14px;"><span style="color:#5599aa">'</span><span style="color:#1b3a45">description</span><span style="color:#5599aa">'</span><span style="color:#1b2b33">: </span><span style="color:#d9795a">'</span><span style="color:#c8471f">Submit quarterly report</span><span style="color:#d9795a">'</span><span style="color:#1b2b33">,</span></div>
<div class="a mono" style="left:1345.5px;top:1229.59px;font-size:11.3px;line-height:14px;"><span style="color:#3c7e8e">}</span><span style="color:#1b2b33">,</span></div>
<div class="a mono" style="left:1323.4px;top:1245.19px;font-size:11.3px;line-height:14px;"><span style="color:#3c7e8e">}</span><span style="color:#1b2b33">,</span></div>
<div class="a mono" style="left:1301.3px;top:1261.39px;font-size:11.3px;line-height:14px;"><span style="color:#3c7e8e">}</span><span style="color:#1b2b33">,</span></div>
<svg class="a" style="left:1301.0px;top:1280.9px" width="8" height="7" viewBox="0 0 8 7"><path d="M1.2 1.9 L3.9 4.6 L6.6 1.9" fill="none" stroke="#1c3440" stroke-width="1.2"/></svg>
<div class="a mono" style="left:1309.3px;top:1277.19px;font-size:11.3px;line-height:14px;"><span style="color:#5599aa">'</span><span style="color:#1b3a45">messages</span><span style="color:#5599aa">'</span><span style="color:#1b2b33">: </span><span style="color:#3c7e8e">[</span></div>
<div class="a" style="left:1283.5px;top:980px;width:1px;height:317px;background:#e0e0e0"></div>
<div class="a" style="left:1305.5px;top:1041px;width:1px;height:223px;background:#e0e0e0"></div>
<div class="a" style="left:1327.5px;top:1124px;width:1px;height:124px;background:#e0e0e0"></div>
<div class="a" style="left:1349.5px;top:1164px;width:1px;height:68px;background:#e0e0e0"></div>
<div class="a" style="left:1305.5px;top:1294px;width:1px;height:3px;background:#e0e0e0"></div>
<div class="a" style="left:1337px;top:1296px;width:3px;height:1px;background:#4a8c9c"></div>
</body></html>
